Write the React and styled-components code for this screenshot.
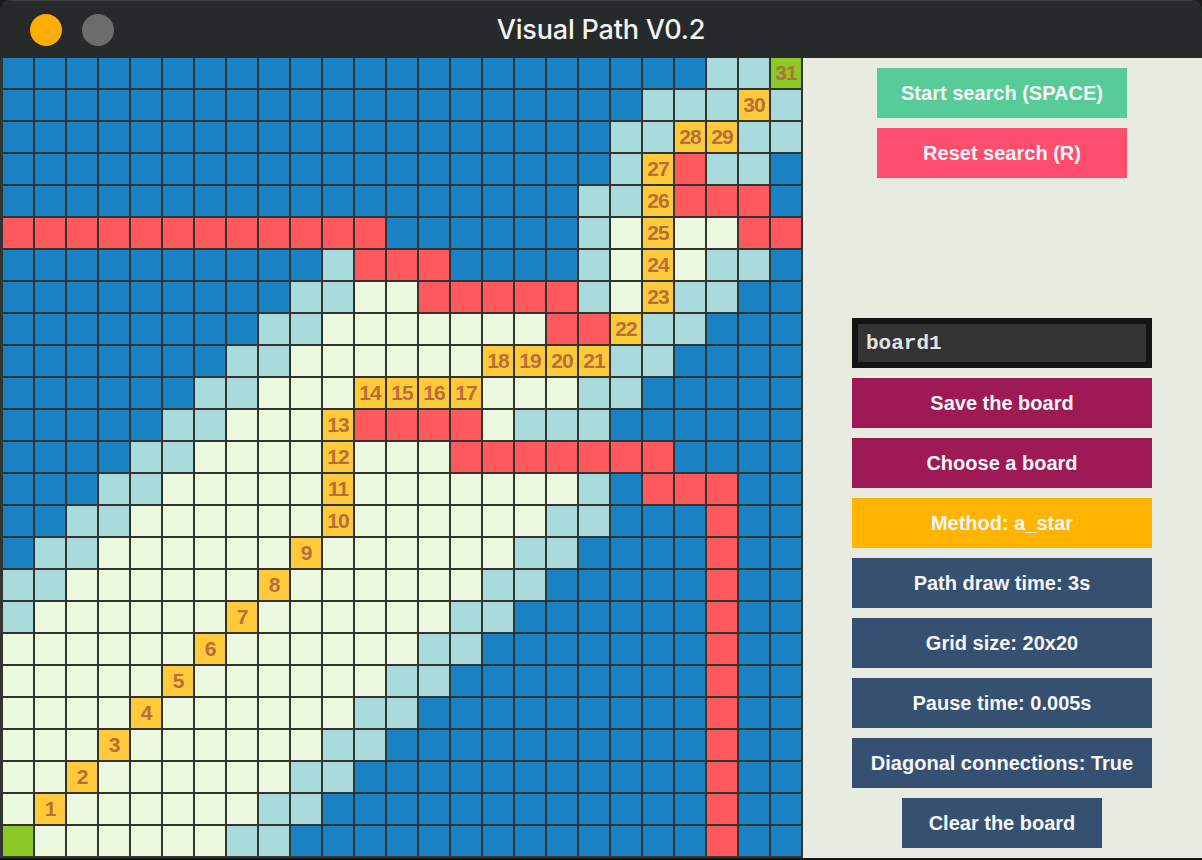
import React from 'react';
import styled, { createGlobalStyle } from 'styled-components';

const GlobalStyle = createGlobalStyle`
  html, body {
    margin: 0;
    padding: 0;
    background: #1c1c1c;
  }
  * {
    box-sizing: border-box;
  }
`;

// run-length rows: letter + count (count defaults to 1)
const ROWS = [
  'B22L2G',
  'B20L3YL',
  'B19L2Y2L2',
  'B19LYRL2B',
  'B18L2YR3B',
  'R12B6LWYW2R2',
  'B10LR3B4LWYWL2B',
  'B9L2W2R5LWYL2B2',
  'B8L2W7R2YL2B3',
  'B7L2W6Y4L2B4',
  'B6L2W3Y4W3L2B5',
  'B5L2W3YR4WL3B6',
  'B4L2W4YW3R7B4',
  'B3L2W5YW7LBR3B2',
  'B2L2W6YW6L2B3RB2',
  'BL2W6YW6L2B4RB2',
  'L2W6YW6L2B5RB2',
  'LW6YW6L2B6RB2',
  'W6YW6L2B7RB2',
  'W5YW6L2B8RB2',
  'W4YW6L2B9RB2',
  'W3YW6L2B10RB2',
  'W2YW6L2B11RB2',
  'WYW6L2B12RB2',
  'GW6L2B13RB2',
];

// path from start to goal, numbered 1..31
const PATH = [
  [23, 1], [22, 2], [21, 3], [20, 4], [19, 5], [18, 6], [17, 7], [16, 8],
  [15, 9], [14, 10], [13, 10], [12, 10], [11, 10], [10, 11], [10, 12],
  [10, 13], [10, 14], [9, 15], [9, 16], [9, 17], [9, 18], [8, 19], [7, 20],
  [6, 20], [5, 20], [4, 20], [3, 20], [2, 21], [2, 22], [1, 23], [0, 24],
];

const COLORS = {
  B: '#1982c4',
  L: '#a8d9db',
  W: '#eaf8de',
  R: '#ff595e',
  Y: '#ffca3a',
  G: '#8ac926',
};

function decodeRow(code) {
  const out = [];
  code.replace(/([A-Z])(\d*)/g, (_, k, n) => {
    const count = n ? parseInt(n, 10) : 1;
    for (let i = 0; i < count; i++) out.push(k);
    return '';
  });
  return out;
}

const labels = {};
PATH.forEach(([r, c], i) => {
  labels[`${r},${c}`] = i + 1;
});

const board = ROWS.map((code, r) =>
  decodeRow(code).map((kind, c) => ({ kind, label: labels[`${r},${c}`] }))
);

const panelButtons = [
  { text: 'Save the board', tone: 'berry' },
  { text: 'Choose a board', tone: 'berry' },
  { text: 'Method: a_star', tone: 'amber' },
  { text: 'Path draw time: 3s', tone: 'slate' },
  { text: 'Grid size: 20x20', tone: 'slate' },
  { text: 'Pause time: 0.005s', tone: 'slate' },
  { text: 'Diagonal connections: True', tone: 'slate' },
];

const TONES = {
  mint: '#57cc99',
  rose: '#ff4d6d',
  berry: '#9e1a55',
  amber: '#ffb400',
  slate: '#355070',
};

export default function App() {
  return (
    <>
      <GlobalStyle />
      <Window>
        <TitleBar>
          <Lights>
            <Light $color="#ffae00" />
            <Light $color="#6b6c6b" />
          </Lights>
          <Title>Visual Path V0.2</Title>
          <div />
        </TitleBar>

        <Main>
          <Board>
            {board.map((row, r) =>
              row.map((cell, c) => (
                <Cell key={`${r}-${c}`} $kind={cell.kind}>
                  {cell.label}
                </Cell>
              ))
            )}
          </Board>

          <Panel>
            <Stack>
              <Button $tone="mint" $width={250}>Start search (SPACE)</Button>
              <Button $tone="rose" $width={250}>Reset search (R)</Button>
            </Stack>

            <Stack>
              <NameField>
                <input type="text" defaultValue="board1" />
              </NameField>
              {panelButtons.map((b) => (
                <Button key={b.text} $tone={b.tone} $width={300}>
                  {b.text}
                </Button>
              ))}
              <Button $tone="slate" $width={200}>Clear the board</Button>
            </Stack>
          </Panel>
        </Main>
      </Window>
    </>
  );
}

const Window = styled.div`
  width: 1202px;
  height: 860px;
  display: flex;
  flex-direction: column;
  background: #151515;
  border-radius: 11px 11px 0 0;
  border-top: 1px solid #3b3d3e;
  overflow: hidden;
`;

const TitleBar = styled.div`
  height: 57px;
  flex-shrink: 0;
  display: grid;
  grid-template-columns: 1fr auto 1fr;
  align-items: center;
  background: #272a2b;
`;

const Lights = styled.div`
  display: flex;
  gap: 20px;
  padding-left: 30px;
`;

const Light = styled.span`
  width: 32px;
  height: 32px;
  border-radius: 50%;
  background: ${(p) => p.$color};
`;

const Title = styled.h1`
  margin: 0;
  font-family: Inter, 'Open Sans', sans-serif;
  font-size: 27px;
  font-weight: 500;
  letter-spacing: -0.2px;
  color: #f4f4f4;
`;

const Main = styled.div`
  height: 800px;
  display: flex;
`;

const Board = styled.div`
  display: grid;
  grid-template-columns: repeat(25, 30px);
  grid-auto-rows: 30px;
  gap: 2px;
  padding: 0 2px 2px 3px;
  background: #323432;
`;

const Cell = styled.div`
  background: ${(p) => COLORS[p.$kind]};
  display: flex;
  align-items: center;
  justify-content: center;
  font-family: 'Liberation Sans', Arial, sans-serif;
  font-weight: 700;
  font-size: 21px;
  letter-spacing: -1px;
  color: #bb6c38;
`;

const Panel = styled.div`
  flex: 1;
  display: flex;
  flex-direction: column;
  justify-content: space-between;
  align-items: center;
  padding: 10px 1px 10px 0;
  background: #e8ebdf;
`;

const Stack = styled.div`
  display: flex;
  flex-direction: column;
  align-items: center;
  gap: 10px;
`;

const Button = styled.button`
  width: ${(p) => p.$width}px;
  height: 50px;
  border: none;
  padding: 0;
  background: ${(p) => TONES[p.$tone]};
  color: #f6f6f6;
  font-family: 'Liberation Sans', Arial, sans-serif;
  font-weight: 700;
  font-size: 20px;
  cursor: pointer;
`;

const NameField = styled.div`
  width: 300px;
  height: 50px;
  border: 6px solid #151515;
  background: #333333;

  input {
    width: 100%;
    height: 100%;
    border: none;
    outline: none;
    padding: 0 0 0 8px;
    background: transparent;
    color: #e4e4e4;
    font-family: 'Liberation Mono', 'Courier New', monospace;
    font-weight: 700;
    font-size: 21px;
  }
`;
